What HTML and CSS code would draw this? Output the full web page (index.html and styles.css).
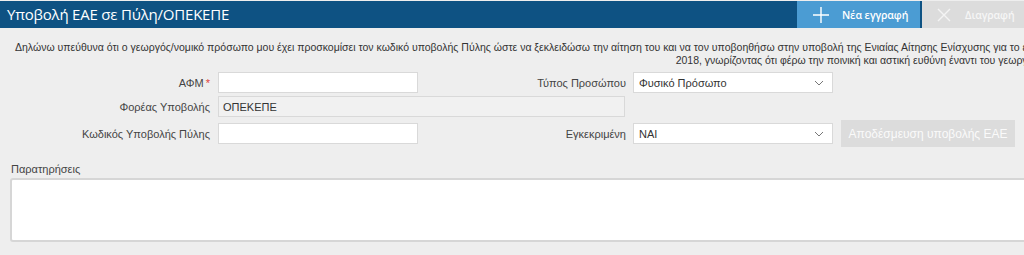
FILE: index.html
```html
<!DOCTYPE html>
<html lang="el">
<head>
<meta charset="utf-8">
<title>Υποβολή ΕΑΕ σε Πύλη/ΟΠΕΚΕΠΕ</title>
<link rel="stylesheet" href="styles.css">
</head>
<body>
<div class="page">
  <header class="header">
    <h1 class="title">Υποβολή ΕΑΕ σε Πύλη/ΟΠΕΚΕΠΕ</h1>
    <button class="hbtn hbtn-new" type="button">
      <svg class="hicon" width="18" height="18" viewBox="0 0 18 18"><path d="M9 1v16M1 9h16" stroke="#fff" stroke-width="1.4" fill="none"/></svg>
      <span>Νέα εγγραφή</span>
    </button>
    <button class="hbtn hbtn-del" type="button">
      <svg class="hicon" width="14" height="14" viewBox="0 0 14 14"><path d="M1 1l12 12M13 1L1 13" stroke="#f4f4f4" stroke-width="1.4" fill="none"/></svg>
      <span>Διαγραφή</span>
    </button>
  </header>

  <div class="declaration"><p class="decl-text">Δηλώνω υπεύθυνα ότι ο γεωργός/νομικό πρόσωπο μου έχει προσκομίσει τον κωδικό υποβολής Πύλης ώστε να ξεκλειδώσω την αίτηση του και να τον υποβοηθήσω στην υποβολή της Ενιαίας Αίτησης Ενίσχυσης για το έτος<br>2018, γνωρίζοντας ότι φέρω την ποινική και αστική ευθύνη έναντι του γεωργού.</p></div>

  <form class="form">
    <label class="lbl r1 c1">ΑΦΜ<span class="req">*</span></label>
    <input class="field r1 c2" type="text">
    <label class="lbl r1 c3">Τύπος Προσώπου</label>
    <div class="select r1 c4"><span>Φυσικό Πρόσωπο</span><svg width="10" height="6" viewBox="0 0 10 6"><path d="M1 1l4 4 4-4" stroke="#777" stroke-width="1" fill="none"/></svg></div>

    <label class="lbl r2 c1">Φορέας Υποβολής</label>
    <input class="field field-disabled r2 c2wide" type="text" value="ΟΠΕΚΕΠΕ" disabled>

    <label class="lbl r3 c1">Κωδικός Υποβολής Πύλης</label>
    <input class="field r3 c2" type="text">
    <label class="lbl r3 c3">Εγκεκριμένη</label>
    <div class="select r3 c4"><span>ΝΑΙ</span><svg width="10" height="6" viewBox="0 0 10 6"><path d="M1 1l4 4 4-4" stroke="#777" stroke-width="1" fill="none"/></svg></div>
    <button class="release r3 c5" type="button">Αποδέσμευση υποβολής ΕΑΕ</button>
  </form>

  <div class="notes">
    <label class="notes-label">Παρατηρήσεις</label>
    <textarea class="notes-area"></textarea>
  </div>
</div>
</body>
</html>
```

FILE: styles.css
```css
html, body {
  margin: 0;
  padding: 0;
  background: #eeeeee;
  overflow: hidden;
}
body {
  font-family: "Liberation Sans", Arial, sans-serif;
  font-size: 11px;
  color: #333;
}
.page {
  width: 1024px;
  height: 255px;
  overflow: hidden;
}
.header {
  display: flex;
  height: 27px;
  margin-top: 1px;
  background: #0e5283;
}
.title {
  flex: 1;
  margin: 0;
  padding-left: 7px;
  font-family: "Open Sans", "DejaVu Sans", sans-serif;
  font-weight: 400;
  font-size: 15px;
  line-height: 27px;
  color: #fff;
  letter-spacing: -0.2px;
}
.hbtn {
  display: flex;
  align-items: center;
  flex: none;
  border: 0;
  margin: 0;
  padding: 0;
  height: 27px;
  font-family: "Open Sans", "DejaVu Sans", sans-serif;
  font-size: 10.5px;
  font-weight: 600;
  letter-spacing: -0.1px;
  color: #fff;
  white-space: nowrap;
}
.hbtn-new {
  width: 123px;
  background: #4b9cd3;
  padding-left: 15px;
  gap: 12px;
}
.hbtn-del {
  width: 102px;
  margin-left: 2px;
  background: #dcdcdc;
  color: #f6f6f6;
  padding-left: 15px;
  gap: 14px;
}
.declaration {
  margin-top: 13px;
  padding-left: 15px;
  white-space: nowrap;
}
.decl-text {
  display: inline-block;
  margin: 0;
  text-align: right;
  font-size: 10.5px;
  line-height: 13px;
  color: #333;
}
.form {
  display: grid;
  grid-template-columns: 218px 200px 215px 200px 181px;
  grid-template-rows: 21px 21px 27px;
  row-gap: 3px;
  margin-top: 5px;
  align-items: center;
}
.lbl {
  text-align: right;
  padding-right: 8px;
  color: #444;
  white-space: nowrap;
}
.c3.lbl { padding-right: 7px; }
.req { color: #e0433a; margin-left: 2px; }
.r1 { grid-row: 1; }
.r2 { grid-row: 2; }
.r3 { grid-row: 3; }
.c1 { grid-column: 1; }
.c2 { grid-column: 2; }
.c3 { grid-column: 3; }
.c4 { grid-column: 4; }
.c5 { grid-column: 5; }
.field {
  box-sizing: border-box;
  height: 21px;
  width: 100%;
  margin: 0;
  border: 1px solid #d9d9d9;
  background: #fff;
  padding: 0 4px;
  font-family: "Liberation Sans", Arial, sans-serif;
  font-size: 11px;
  color: #333;
}
.field.c2wide {
  grid-column: 2 / 4;
  width: calc(100% - 8px);
}
.field-disabled {
  background: #f1f1f1;
  color: #333;
}
.select {
  box-sizing: border-box;
  height: 21px;
  border: 1px solid #d9d9d9;
  background: #fff;
  display: flex;
  align-items: center;
  justify-content: space-between;
  padding: 0 8px 0 5px;
  color: #333;
}
.release {
  box-sizing: border-box;
  margin: 0 0 0 8px;
  height: 27px;
  width: 174px;
  border: 0;
  background: #dcdcdc;
  color: #fafafa;
  font-family: "Liberation Sans", Arial, sans-serif;
  font-size: 12px;
  padding: 0;
}
.notes {
  margin-top: 16px;
  padding-left: 10px;
}
.notes-label {
  display: block;
  padding-left: 1px;
  line-height: 13px;
  color: #444;
}
.notes-area {
  display: block;
  box-sizing: border-box;
  margin-top: 2px;
  width: 1040px;
  height: 64px;
  border: 2px solid #d6d6d6;
  border-radius: 3px;
  background: #fff;
  resize: none;
}
```
